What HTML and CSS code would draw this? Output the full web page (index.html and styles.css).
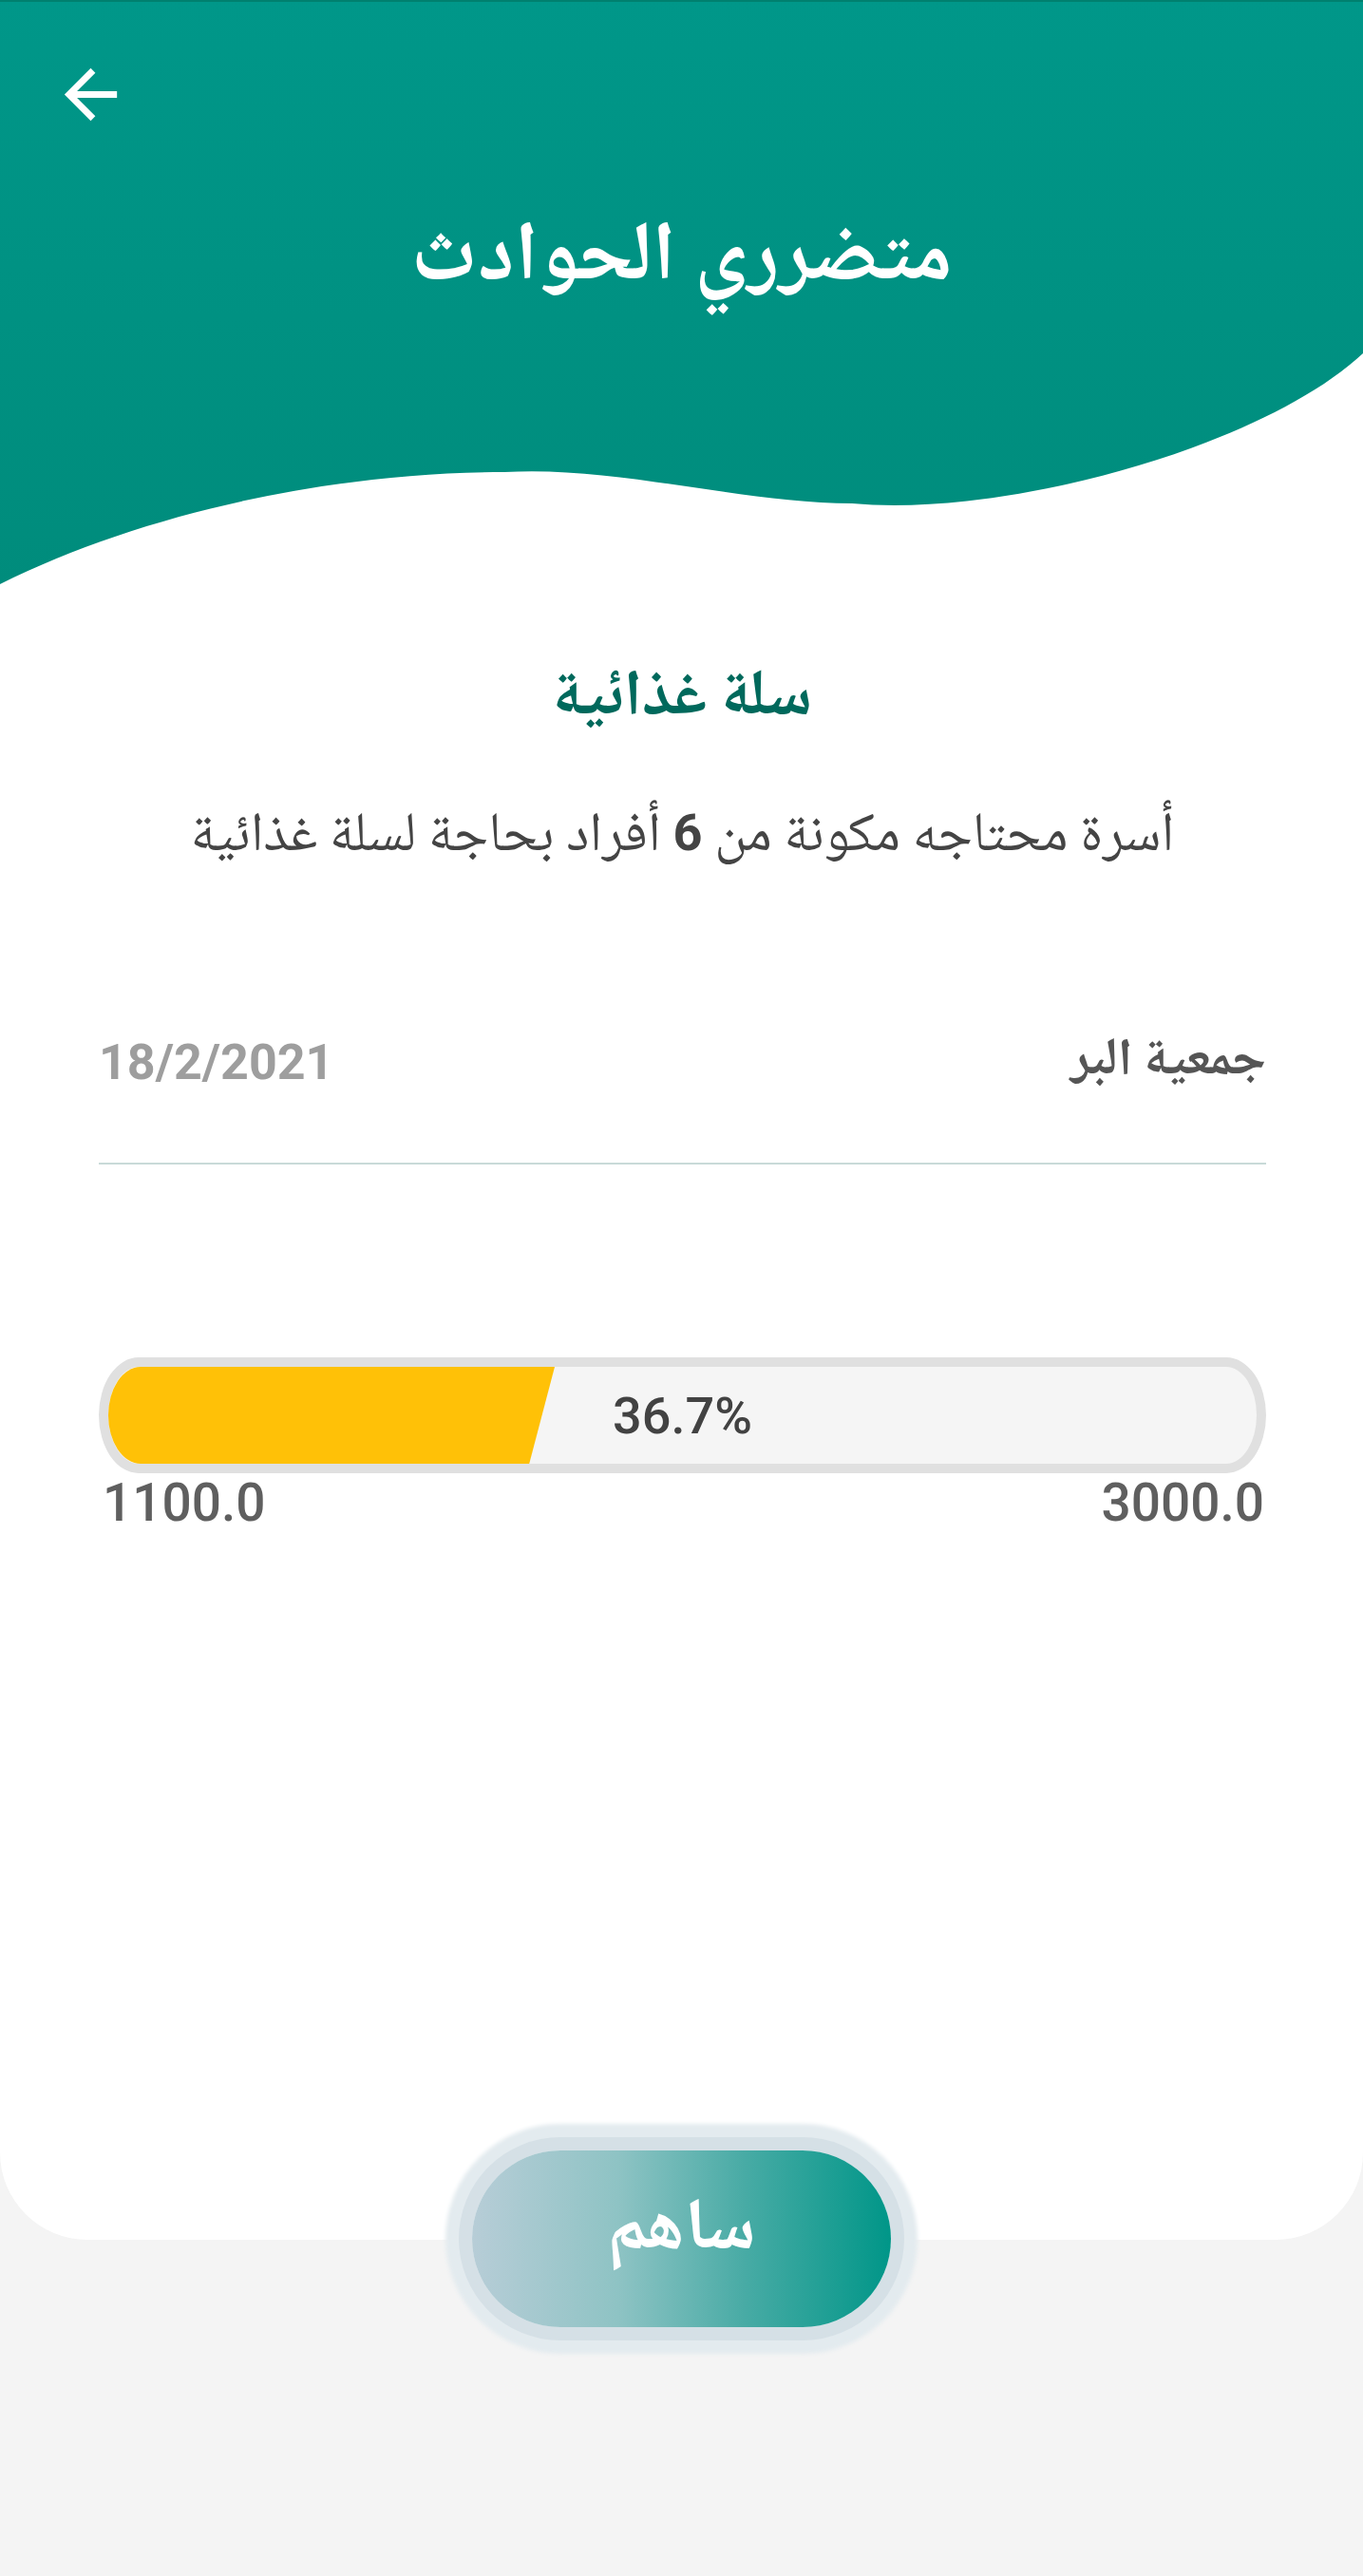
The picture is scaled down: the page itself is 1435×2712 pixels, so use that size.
FILE: index.html
```html
<!DOCTYPE html>
<html lang="ar" dir="rtl">
<head>
<meta charset="utf-8">
<title>متضرري الحوادث</title>
<link rel="stylesheet" href="styles.css">
</head>
<body>
<div class="page">
  <div class="card">
    <header class="hero">
      <svg class="hero-bg" viewBox="0 0 1435 620" preserveAspectRatio="none" aria-hidden="true">
        <defs>
          <linearGradient id="tg" x1="0" y1="0" x2="0" y2="1">
            <stop offset="0" stop-color="#009789"/>
            <stop offset="1" stop-color="#008c7c"/>
          </linearGradient>
        </defs>
        <path d="M0 0 H1435 V372 C1330 470 1060 545 897 530 C780 530 650 490 531 497 C350 497 150 540 0 615 Z" fill="url(#tg)"/>
        <rect x="0" y="0" width="1435" height="2" fill="#00806f"/>
      </svg>
      <div class="hero-top">
        <button class="back" aria-label="رجوع">
          <svg viewBox="0 0 24 24" width="83" height="83"><path d="M20 11H7.83l5.59-5.59L12 4l-8 8 8 8 1.41-1.41L7.83 13H20v-2z" fill="#fff"/></svg>
        </button>
      </div>
      <h1 class="hero-title">متضرري الحوادث</h1>
    </header>

    <section class="content">
      <h2 class="item-title">سلة غذائية</h2>
      <p class="item-desc">أسرة محتاجه مكونة من <b class="num">6</b> أفراد بحاجة لسلة غذائية</p>

      <div class="meta">
        <span class="org">جمعية البر</span>
        <span class="date">18/2/2021</span>
      </div>

      <div class="progress">
        <div class="track">
          <div class="fill"></div>
          <span class="pct">36.7%</span>
        </div>
        <div class="range">
          <span>1100.0</span>
          <span>3000.0</span>
        </div>
      </div>
    </section>
  </div>

  <div class="cta">
    <button class="donate">ساهم</button>
  </div>
</div>
</body>
</html>
```

FILE: styles.css
```css
* { box-sizing: border-box; }

html, body {
  margin: 0;
  padding: 0;
}

body {
  background: #f4f4f4;
  font-family: "Noto Naskh Arabic", "Noto Sans Arabic", "DejaVu Sans", sans-serif;
  width: 1435px;
  min-height: 2712px;
}

.page {
  display: flex;
  flex-direction: column;
}

.card {
  background: #ffffff;
  height: 2358px;
  border-radius: 0 0 92px 92px;
  display: flex;
  flex-direction: column;
}

.hero {
  position: relative;
  height: 615px;
  display: flex;
  flex-direction: column;
}

.hero-bg {
  position: absolute;
  left: 0;
  top: 0;
  width: 1435px;
  height: 620px;
}

.hero-top {
  position: relative;
  direction: ltr;
  display: flex;
  padding: 58px 0 0 54px;
  height: 141px;
}

.back {
  width: 83px;
  height: 83px;
  padding: 0;
  border: 0;
  background: transparent;
  display: flex;
}

.hero-title {
  position: relative;
  margin: 0;
  text-align: center;
  color: #ffffff;
  font-size: 88px;
  font-weight: 700;
  line-height: 100px;
  margin-top: 84px;
}

.content {
  display: flex;
  flex-direction: column;
  padding: 0 102px 0 104px;
}

.item-title {
  margin: 82px 0 0;
  text-align: center;
  color: #00695c;
  font-size: 68px;
  font-weight: 700;
  line-height: 80px;
}

.item-desc {
  margin: 60px 0 0;
  text-align: center;
  color: #444444;
  font-size: 58px;
  font-weight: 400;
  line-height: 80px;
}

.num {
  font-family: Roboto, "Noto Sans", sans-serif;
  font-weight: 700;
  font-size: 54px;
}

.meta {
  margin-top: 156px;
  display: flex;
  justify-content: space-between;
  align-items: center;
  line-height: 80px;
  padding-bottom: 65px;
  border-bottom: 2px solid #c9dad8;
}

.org {
  color: #555555;
  font-size: 55px;
  font-weight: 700;
}

.date {
  color: #9e9e9e;
  font-family: Roboto, "Noto Sans", sans-serif;
  font-size: 52px;
  font-weight: 700;
}

.progress {
  margin-top: 203px;
  direction: ltr;
  display: flex;
  flex-direction: column;
}

.track {
  position: relative;
  height: 122px;
  background: #f5f5f5;
  border: 10px solid #e0e0e0;
  border-radius: 42px / 61px;
  display: flex;
  align-items: center;
  justify-content: center;
}

.fill {
  position: absolute;
  left: 0;
  top: 0;
  bottom: 0;
  width: 470px;
  background: #ffc107;
  border-radius: 34px 0 0 34px / 51px 0 0 51px;
  clip-path: polygon(0 0, 100% 0, 94.3% 100%, 0 100%);
}

.pct {
  position: relative;
  color: #424242;
  font-family: Roboto, "Noto Sans", sans-serif;
  font-size: 54px;
  font-weight: 500;
}

.range {
  display: flex;
  justify-content: space-between;
  color: #5f5f5f;
  font-family: Roboto, "Noto Sans", sans-serif;
  font-size: 55px;
  font-weight: 500;
  line-height: 62px;
  padding: 0 2px 0 4px;
}

.cta {
  display: flex;
  justify-content: center;
  margin-top: -94px;
}

.donate {
  width: 441px;
  height: 186px;
  border: 0;
  border-radius: 93px;
  background: linear-gradient(90deg, #b7cdd7 0%, #8ec3c4 35%, #48aba5 65%, #009688 100%);
  box-shadow: 0 0 0 14px #d5e0e6, 0 0 4px 28px #e3ebef;
  color: #ffffff;
  font-family: "Noto Naskh Arabic", "Noto Sans Arabic", "DejaVu Sans", sans-serif;
  font-size: 76px;
  font-weight: 700;
  line-height: 1;
  padding: 0 0 12px;
}
```
